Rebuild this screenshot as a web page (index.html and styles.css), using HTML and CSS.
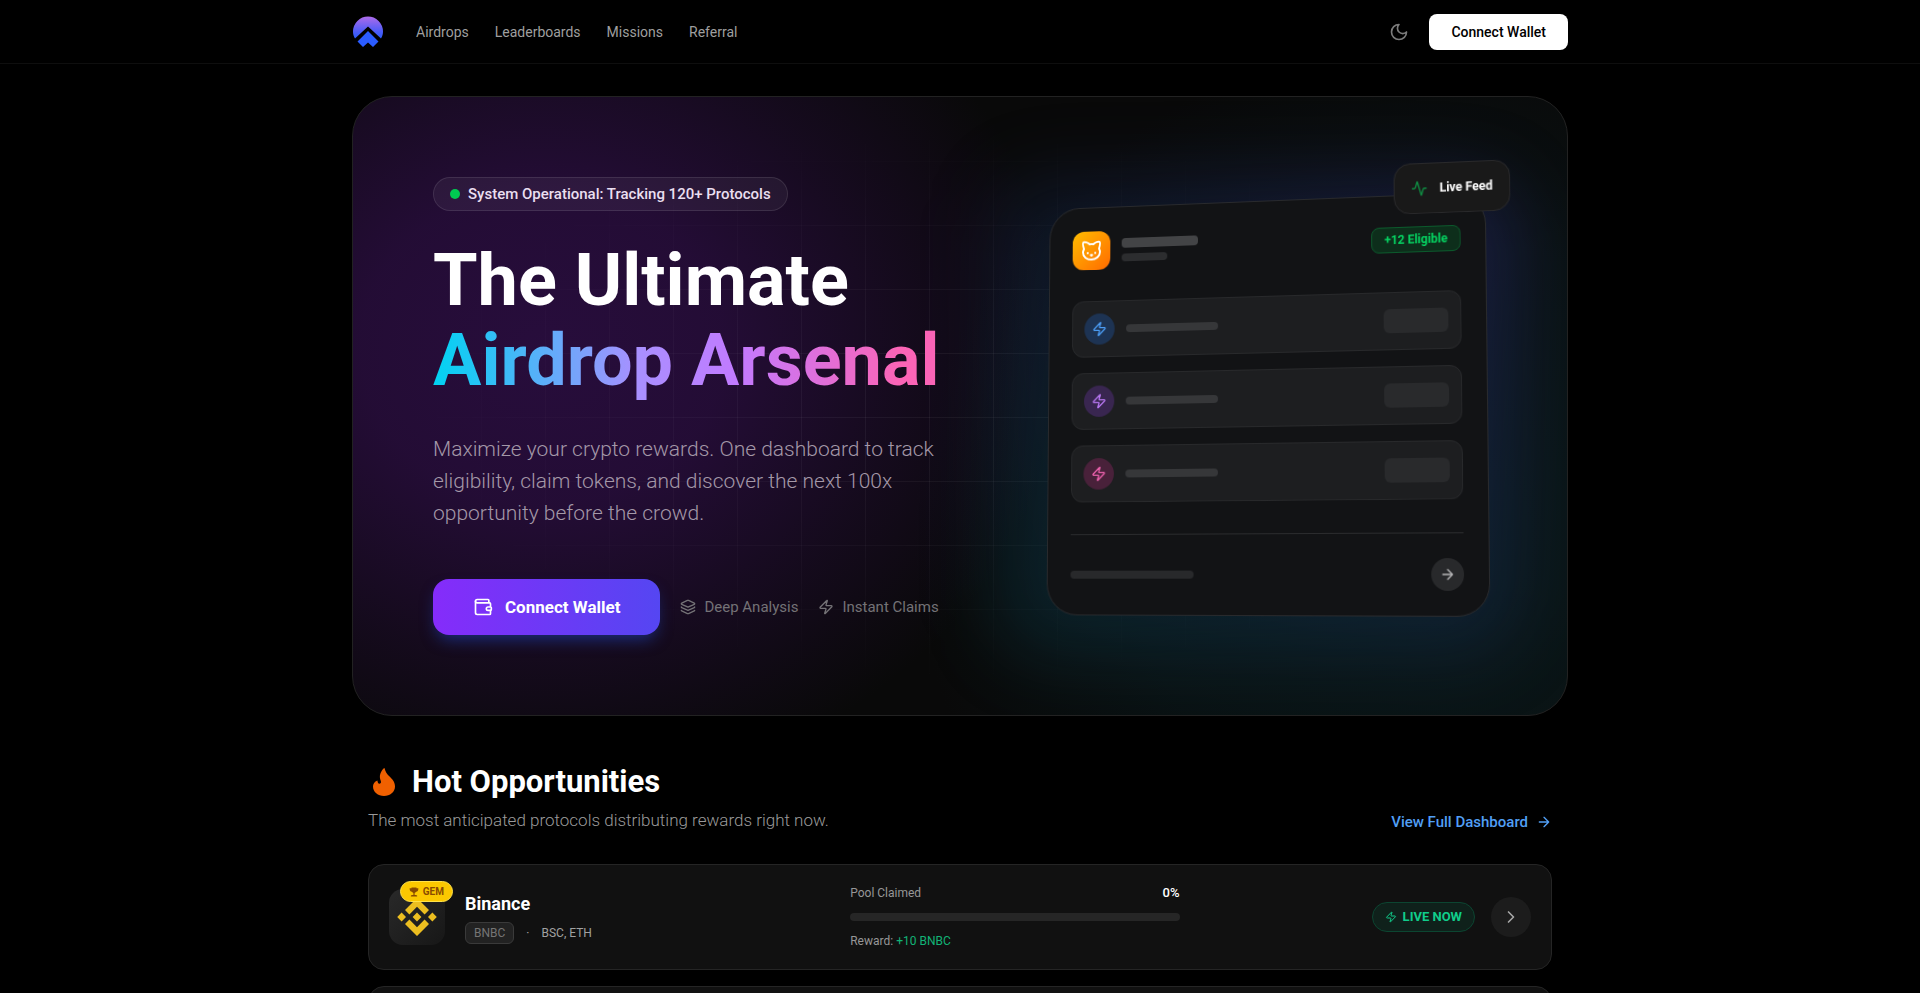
FILE: index.html
```
<!doctype html>
<html lang="en">
<head>
	<meta charset="utf-8"/>
	<meta name="viewport" content="width=device-width, initial-scale=1">
	<title>Airdrops</title>
	<link rel="stylesheet" href="styles.css">
</head>
<body>
	<!-- shared icons -->
	<svg class="sprite" aria-hidden="true">
		<symbol id="zap" viewBox="0 0 24 24"><path d="M4 14a1 1 0 0 1-.78-1.63l9.9-10.2a.5.5 0 0 1 .86.46l-1.92 6.02A1 1 0 0 0 13 10h7a1 1 0 0 1 .78 1.63l-9.9 10.2a.5.5 0 0 1-.86-.46l1.92-6.02A1 1 0 0 0 11 14z"/></symbol>
		<symbol id="arrow" viewBox="0 0 24 24"><path d="M5 12h14M12 5l7 7-7 7"/></symbol>
	</svg>

	<header class="header">
		<div class="container header-inner">
			<a href="#" class="logo" aria-label="Home">
				<svg viewBox="0 0 32 32" width="32" height="32">
					<defs>
						<linearGradient id="logoFill" x1="0" y1="0" x2="0" y2="1">
							<stop offset="0" stop-color="#ad6bea"/>
							<stop offset=".7" stop-color="#4a5cf8"/>
							<stop offset="1" stop-color="#2b5cf8"/>
						</linearGradient>
					</defs>
					<path fill="url(#logoFill)" d="M3 22.500C1.500 20 1 18 1 15.500a15 15 0 0 1 30 0c0 2.500-.500 4.500-2 7L16 10.500z"/>
					<path fill="#2b5cff" d="M16 15 26.500 25.500 21 31 16 26.500 11 31 5.500 25.500z"/>
				</svg>
			</a>
			<nav class="nav">
				<a href="#">Airdrops</a>
				<a href="#">Leaderboards</a>
				<a href="#">Missions</a>
				<a href="#">Referral</a>
			</nav>
			<button class="theme-btn" aria-label="Toggle theme">
				<svg class="icon" viewBox="0 0 24 24" width="20" height="20"><path d="M12 3a6 6 0 0 0 9 9 9 9 0 1 1-9-9z"/></svg>
			</button>
			<button class="btn-white">Connect Wallet</button>
		</div>
	</header>

	<main class="container">
		<section class="hero">
			<div class="hero-grid"></div>
			<div class="hero-inner">
				<div class="hero-text">
					<div class="status"><span class="dot"></span>System Operational: Tracking 120+ Protocols</div>
					<h1>The Ultimate<br><span class="gradient-text">Airdrop Arsenal</span></h1>
					<p class="lead">Maximize your crypto rewards. One dashboard to track eligibility, claim tokens, and discover the next 100x opportunity before the crowd.</p>
					<div class="actions">
						<button class="btn-main">
							<svg class="icon" viewBox="0 0 24 24" width="20" height="20"><path d="M19 7V4a1 1 0 0 0-1-1H5a2 2 0 0 0 0 4h15a1 1 0 0 1 1 1v4h-3a2 2 0 0 0 0 4h3a1 1 0 0 0 1-1v-2a1 1 0 0 0-1-1"/><path d="M3 5v14a2 2 0 0 0 2 2h15a1 1 0 0 0 1-1v-4"/></svg>
							Connect Wallet
						</button>
						<div class="features">
							<span class="feature">
								<svg class="icon" viewBox="0 0 24 24" width="16" height="16"><path d="M12.830 2.180a2 2 0 0 0-1.660 0L2.600 6.080a1 1 0 0 0 0 1.830l8.580 3.910a2 2 0 0 0 1.660 0l8.580-3.900a1 1 0 0 0 0-1.830z"/><path d="M2 12a1 1 0 0 0 .58.91l8.600 3.910a2 2 0 0 0 1.650 0l8.580-3.900A1 1 0 0 0 22 12"/><path d="M2 17a1 1 0 0 0 .58.91l8.600 3.910a2 2 0 0 0 1.650 0l8.580-3.900A1 1 0 0 0 22 17"/></svg>
								Deep Analysis
							</span>
							<span class="feature">
								<svg class="icon" width="16" height="16"><use href="#zap"/></svg>
								Instant Claims
							</span>
						</div>
					</div>
				</div>

				<div class="hero-visual">
					<div class="panel">
						<div class="panel-head">
							<div class="cat">
								<svg class="icon" viewBox="0 0 24 24" width="24" height="24"><path d="M12 5c.67 0 1.350.09 2 .26 1.780-2 5.030-2.840 6.420-2.260 1.400.58-.42 7-.42 7 .57 1.070 1 2.240 1 3.440C21 17.900 16.970 21 12 21s-9-3-9-7.560c0-1.250.5-2.400 1-3.440 0 0-1.890-6.420-.5-7 1.390-.58 4.720.23 6.500 2.230A9.040 9.040 0 0 1 12 5z"/><path d="M8 14v.5M16 14v.5M11.250 16.250h1.500L12 17z"/></svg>
							</div>
							<div class="head-bars">
								<div class="bar bar-title"></div>
								<div class="bar bar-sub"></div>
							</div>
							<span class="eligible">+12 Eligible</span>
						</div>
						<div class="panel-rows">
							<div class="panel-row">
								<span class="circle blue"><svg class="icon" width="16" height="16"><use href="#zap"/></svg></span>
								<div class="bar bar-row"></div>
								<div class="pill"></div>
							</div>
							<div class="panel-row">
								<span class="circle purple"><svg class="icon" width="16" height="16"><use href="#zap"/></svg></span>
								<div class="bar bar-row"></div>
								<div class="pill"></div>
							</div>
							<div class="panel-row">
								<span class="circle pink"><svg class="icon" width="16" height="16"><use href="#zap"/></svg></span>
								<div class="bar bar-row"></div>
								<div class="pill"></div>
							</div>
						</div>
						<div class="panel-foot">
							<div class="bar bar-foot"></div>
							<span class="circle grey"><svg class="icon" width="16" height="16"><use href="#arrow"/></svg></span>
						</div>
						<div class="live-feed">
							<svg class="icon" viewBox="0 0 24 24" width="16" height="16"><path d="M22 12h-2.480a2 2 0 0 0-1.930 1.460l-2.350 8.360a.25.25 0 0 1-.48 0L9.240 2.180a.25.25 0 0 0-.48 0l-2.350 8.360A2 2 0 0 1 4.490 12H2"/></svg>
							Live Feed
						</div>
					</div>
				</div>
			</div>
		</section>

		<section class="hot">
			<div class="hot-head">
				<div>
					<h2>
						<svg viewBox="0 0 32 32" width="32" height="32"><path fill="#f06000" d="M16.500 2c-1 0-5 5-4.600 9.500.2 2.300 1.200 3.300 1.100 4.800-.1 1-1 1.700-1.900 1.400-1.300-.4-1.400-2-1.700-3.200C6.500 15.500 5 18 5 20.500 5 26 10 30 16 30s11-4 11-9.500c0-5-3-7.500-6-10.500-2.500-2.500-3.500-4.500-4.500-8z"/></svg>
						Hot Opportunities
					</h2>
					<p>The most anticipated protocols distributing rewards right now.</p>
				</div>
				<a href="#" class="view-all">View Full Dashboard <svg class="icon" width="16" height="16"><use href="#arrow"/></svg></a>
			</div>

			<div class="list">
				<article class="card">
					<div class="token">
						<div class="token-logo">
							<svg viewBox="0 0 40 40" width="40" height="40" fill="#ecbe20"><path d="M20 1 32 13l-4.400 4.400L20 9.800l-7.600 7.600L8 13z"/><path d="M20 39 8 27l4.400-4.400 7.600 7.600 7.600-7.600L32 27z"/><path d="M20 15.600 24.400 20 20 24.400 15.600 20zM4.600 15.600 9 20l-4.400 4.400L.2 20zM35.400 15.600l4.400 4.400-4.400 4.400L31 20z"/></svg>
							<span class="gem">
								<svg viewBox="0 0 24 24" width="10" height="10" fill="#894b00"><path d="M6 1h12v2h4.500c0 5-1.500 8-5.500 8.500-1 1.500-2.300 2.500-3.500 3V19H18v1.500h1.500V23h-15v-2.500H6V19h4.500v-4.500c-1.200-.5-2.500-1.500-3.500-3C3 11 1.500 8 1.500 3H6z"/></svg>
								GEM
							</span>
						</div>
						<div class="token-info">
							<h3>Binance</h3>
							<div class="meta"><span class="symbol">BNBC</span><span>·</span><span>BSC, ETH</span></div>
						</div>
					</div>
					<div class="pool">
						<div class="pool-top"><label for="pool-binance">Pool Claimed</label><span class="percent">0%</span></div>
						<progress id="pool-binance" value="0" max="100"></progress>
						<div class="reward">Reward: <span>+10 BNBC</span></div>
					</div>
					<div class="card-end">
						<span class="live"><svg class="icon" width="12" height="12"><use href="#zap"/></svg>LIVE NOW</span>
						<button class="open" aria-label="Open Binance"><svg class="icon" viewBox="0 0 24 24" width="20" height="20"><path d="m9 18 6-6-6-6"/></svg></button>
					</div>
				</article>
				<article class="card"></article>
			</div>
		</section>
	</main>
</body>
</html>
```
FILE: styles.css
```
* {
	box-sizing: border-box;
}
body {
	margin: 0;
	background: #000;
	color: #fff;
	font-family: Roboto, "Liberation Sans", sans-serif;
	font-size: 16px;
	line-height: 24px;
	scrollbar-width: none;
}
h1, h2, h3, p {
	margin: 0;
}
a {
	color: inherit;
	text-decoration: none;
}
button {
	font: inherit;
	border: none;
	cursor: pointer;
}
.sprite {
	display: none;
}
.icon {
	flex: none;
	fill: none;
	stroke: currentColor;
	stroke-width: 2;
	stroke-linecap: round;
	stroke-linejoin: round;
}
.container {
	max-width: 1216px;
	margin: 0 auto;
}

/* header */
.header {
	height: 64px;
	border-bottom: 1px solid #0e0e0e;
}
.header-inner {
	display: flex;
	align-items: center;
	height: 100%;
}
.logo {
	display: flex;
	margin-right: 32px;
}
.nav {
	display: flex;
	gap: 26px;
	margin-right: auto;
	color: #9f9f9f;
	font-size: 14px;
	line-height: 20px;
}
.theme-btn {
	display: flex;
	padding: 8px;
	margin-right: 12px;
	background: none;
	color: #7c7c7c;
}
.btn-white {
	height: 36px;
	padding: 0 22px;
	border-radius: 8px;
	background: #fff;
	color: #000;
	font-size: 14px;
	font-weight: 500;
}

/* hero */
.hero {
	position: relative;
	overflow: hidden;
	margin-top: 32px;
	padding: 80px;
	border: 1px solid #222;
	border-radius: 40px;
	background:
		radial-gradient(closest-side, rgba(48, 14, 74, .78), rgba(48, 14, 74, .68) 35%, rgba(48, 14, 74, .3) 70%, transparent) -330px -200px / 1040px 900px no-repeat,
		radial-gradient(closest-side, rgba(11, 38, 42, .5), rgba(11, 38, 42, .3) 60%, transparent) 560px -60px / 1060px 1000px no-repeat,
		#090909;
}
.hero-grid {
	position: absolute;
	inset: 0;
	background:
		linear-gradient(to right, rgba(255, 255, 255, .05) 1px, transparent 1px) 0 0 / 64px 64px,
		linear-gradient(to bottom, rgba(255, 255, 255, .05) 1px, transparent 1px) 0 0 / 64px 64px;
	mask-image: radial-gradient(ellipse 50% 50% at 50% 50%, #000 20%, transparent 95%);
}
.hero-inner {
	position: relative;
	display: grid;
	grid-template-columns: 1fr 1fr;
	align-items: center;
	gap: 32px;
}
.status {
	display: inline-flex;
	align-items: center;
	gap: 8px;
	height: 34px;
	padding: 0 16px;
	border: 1px solid rgba(255, 255, 255, .1);
	border-radius: 17px;
	background: rgba(255, 255, 255, .05);
	color: #eadff0;
	font-size: 15px;
	font-weight: 500;
	line-height: 20px;
	vertical-align: top;
}
.dot {
	width: 10px;
	height: 10px;
	border-radius: 50%;
	background: #00c951;
}
h1 {
	margin: 30px 0 32px;
	font-size: 72px;
	font-weight: 700;
	line-height: 80px;
	white-space: nowrap;
}
.gradient-text {
	display: inline-block;
	background: linear-gradient(to right, #00d3f2, #a890ff 40%, #c27aff 60%, #fb64b6 92%);
	background-clip: text;
	-webkit-background-clip: text;
	color: transparent;
}
.lead {
	max-width: 512px;
	color: #a498a8;
	font-size: 21px;
	font-weight: 300;
	line-height: 32px;
}
.actions {
	display: flex;
	align-items: center;
	gap: 20px;
	margin-top: 50px;
}
.btn-main {
	display: flex;
	align-items: center;
	justify-content: center;
	gap: 12px;
	height: 56px;
	padding: 0 40px;
	border-radius: 16px;
	background: linear-gradient(to right, #852cfa, #5546f2);
	box-shadow: 0 8px 16px -4px rgba(30, 70, 190, .6);
	color: #fff;
	font-size: 17px;
	font-weight: 700;
	white-space: nowrap;
}
.features {
	display: flex;
	gap: 20px;
	color: #747276;
	font-size: 15px;
	line-height: 20px;
	white-space: nowrap;
}
.feature {
	display: flex;
	align-items: center;
	gap: 8px;
}

/* tilted preview panel */
.hero-visual {
	position: relative;
	display: flex;
	justify-content: flex-end;
	perspective: 2000px;
}
/* glow behind the panel */
.hero-visual::before {
	content: "";
	position: absolute;
	inset: -20px -30px -40px 20px;
	border-radius: 50px;
	background: linear-gradient(to bottom left, rgba(72, 56, 190, .26), rgba(40, 70, 150, .2) 45%, rgba(10, 100, 120, .22));
	filter: blur(36px);
}
.panel {
	position: relative;
	width: 448px;
	padding: 24px;
	border: 1px solid #292a2d;
	border-radius: 32px;
	background: #121315;
	transform: rotateX(5deg) rotateY(-12deg);
	transform-style: preserve-3d;
}
.panel-head {
	display: flex;
	align-items: center;
	gap: 12px;
	margin-bottom: 32px;
}
.cat {
	display: flex;
	align-items: center;
	justify-content: center;
	width: 40px;
	height: 40px;
	border-radius: 12px;
	background: linear-gradient(135deg, #ffbc00, #ff6b00);
}
.head-bars {
	display: grid;
	gap: 6px;
	margin-right: auto;
}
.bar {
	height: 8px;
	border-radius: 4px;
	background: #363739;
}
.bar-title {
	width: 80px;
	height: 10px;
	background: #434446;
}
.bar-sub {
	width: 48px;
	background: #2c2d2f;
}
.eligible {
	padding: 4px 12px;
	border: 1px solid #0b5a2c;
	border-radius: 8px;
	background: #0d2e1b;
	color: #05d562;
	font-size: 12px;
	font-weight: 700;
	line-height: 16px;
}
.panel-rows {
	display: grid;
	gap: 16px;
}
.panel-row {
	display: flex;
	align-items: center;
	gap: 12px;
	padding: 12px;
	border: 1px solid #28292b;
	border-radius: 12px;
	background: #1d1e20;
}
.circle {
	display: flex;
	align-items: center;
	justify-content: center;
	width: 32px;
	height: 32px;
	border-radius: 50%;
}
.blue {
	background: #1d3353;
	color: #4c9df5;
}
.purple {
	background: #392650;
	color: #b877f2;
}
.pink {
	background: #49213a;
	color: #ee62ae;
}
.grey {
	background: #28292b;
	color: #b4b4b5;
}
.bar-row {
	width: 96px;
}
.pill {
	width: 64px;
	height: 24px;
	margin-left: auto;
	border-radius: 6px;
	background: #292a2c;
}
.panel-foot {
	display: flex;
	align-items: center;
	justify-content: space-between;
	margin-top: 32px;
	padding-top: 24px;
	border-top: 1px solid #2b2c2e;
}
.bar-foot {
	width: 128px;
	background: #28292b;
}
.live-feed {
	position: absolute;
	top: -24px;
	right: -28px;
	display: flex;
	align-items: center;
	gap: 12px;
	padding: 16px;
	border: 1px solid #29292b;
	border-radius: 16px;
	background: #191919;
	font-size: 12px;
	font-weight: 700;
	line-height: 16px;
	transform: translateZ(40px);
}
.live-feed .icon {
	color: #108a42;
}

/* hot opportunities */
.hot {
	padding: 48px 16px;
}
.hot-head {
	display: flex;
	align-items: flex-end;
	justify-content: space-between;
	margin-bottom: 32px;
}
h2 {
	display: flex;
	align-items: center;
	gap: 12px;
	margin-bottom: 8px;
	font-size: 31px;
	font-weight: 700;
	line-height: 36px;
}
.hot-head p {
	color: #9a9a9a;
	font-size: 17px;
	font-weight: 300;
}
.view-all {
	display: flex;
	align-items: center;
	gap: 8px;
	color: #519ff5;
	font-size: 15px;
	font-weight: 500;
	line-height: 20px;
}
.list {
	display: grid;
	gap: 16px;
}
.card {
	display: grid;
	grid-template-columns: 43fr 33fr 32fr;
	align-items: center;
	gap: 32px;
	min-height: 106px;
	padding: 16px 20px;
	border: 1px solid #252525;
	border-radius: 16px;
	background: #111;
}
.token {
	display: flex;
	align-items: center;
	gap: 20px;
}
.token-logo {
	position: relative;
	display: flex;
	align-items: center;
	justify-content: center;
	width: 56px;
	height: 56px;
	border-radius: 14px;
	background: linear-gradient(135deg, #292929, #171717);
}
.gem {
	position: absolute;
	top: -8px;
	right: -8px;
	display: flex;
	align-items: center;
	gap: 4px;
	height: 21px;
	padding: 0 8px;
	border: 1px solid #ffe24a;
	border-radius: 11px;
	background: #fcc800;
	color: #894b00;
	font-size: 10px;
	font-weight: 700;
	line-height: 16px;
}
h3 {
	font-size: 18px;
	font-weight: 700;
	line-height: 28px;
}
.meta {
	display: flex;
	align-items: center;
	gap: 12px;
	margin-top: 4px;
	color: #a1a1a1;
	font-size: 12px;
	line-height: 16px;
}
.symbol {
	padding: 2px 8px;
	border: 1px solid #3a3a3a;
	border-radius: 6px;
	background: #222;
	color: #757575;
}
.pool {
	display: grid;
	gap: 12px;
	color: #979797;
	font-size: 12px;
	line-height: 16px;
}
.pool-top {
	display: flex;
	justify-content: space-between;
}
.percent {
	color: #fff;
	font-size: 13px;
	font-weight: 500;
}
progress {
	display: block;
	width: 100%;
	height: 8px;
	border: none;
	border-radius: 4px;
	overflow: hidden;
	background: #262626;
	appearance: none;
}
progress::-webkit-progress-bar {
	background: #262626;
}
progress::-webkit-progress-value {
	background: #00bc7d;
}
.reward span {
	color: #12b376;
}
.card-end {
	display: flex;
	align-items: center;
	justify-content: flex-end;
	gap: 16px;
}
.live {
	display: flex;
	align-items: center;
	gap: 6px;
	height: 30px;
	padding: 0 12px;
	border: 1px solid #0c4531;
	border-radius: 15px;
	background: #0f211b;
	color: #10cd8b;
	font-size: 13px;
	font-weight: 700;
	line-height: 16px;
}
.open {
	display: flex;
	align-items: center;
	justify-content: center;
	width: 40px;
	height: 40px;
	padding: 0;
	border-radius: 50%;
	background: #1c1c1c;
	color: #a6a6a6;
}
```
